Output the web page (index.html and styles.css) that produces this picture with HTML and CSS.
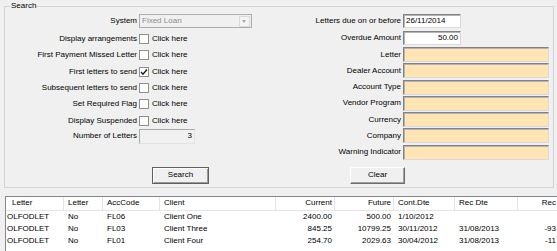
FILE: index.html
```html
<!DOCTYPE html>
<html lang="en">
<head>
  <meta charset="UTF-8">
  <title>Letters</title>
  <link rel="stylesheet" href="styles.css">
</head>
<body>

  <fieldset class="search">
    <legend>Search</legend>

    <div class="cols">
      <!-- left side -->
      <div class="left">
        <div class="field first">
          <label>System</label>
          <div class="combo"><span>Fixed Loan</span><i class="combo-btn"></i></div>
        </div>
        <div class="field">
          <label>Display arrangements</label>
          <span class="box"></span><span class="click">Click here</span>
        </div>
        <div class="field">
          <label>First Payment Missed Letter</label>
          <span class="box"></span><span class="click">Click here</span>
        </div>
        <div class="field">
          <label>First letters to send</label>
          <span class="box"><svg width="8" height="8" viewBox="0 0 8 8"><path d="M1 4 L3 6.2 L7 1.5" fill="none" stroke="#1a1a1a" stroke-width="1.4"/></svg></span><span class="click">Click here</span>
        </div>
        <div class="field">
          <label>Subsequent letters to send</label>
          <span class="box"></span><span class="click">Click here</span>
        </div>
        <div class="field">
          <label>Set Required Flag</label>
          <span class="box"></span><span class="click">Click here</span>
        </div>
        <div class="field">
          <label>Display Suspended</label>
          <span class="box"></span><span class="click">Click here</span>
        </div>
        <div class="field count">
          <label>Number of Letters</label>
          <div class="txt disabled num">3</div>
        </div>
      </div>

      <!-- right side -->
      <div class="right">
        <div class="field first">
          <label>Letters due on or before</label>
          <div class="txt small">26/11/2014</div>
        </div>
        <div class="field second">
          <label>Overdue Amount</label>
          <div class="txt small num">50.00</div>
        </div>
        <div class="field yellow">
          <label>Letter</label>
          <div class="txt wide"></div>
        </div>
        <div class="field yellow">
          <label>Dealer Account</label>
          <div class="txt wide"></div>
        </div>
        <div class="field yellow">
          <label>Account Type</label>
          <div class="txt wide"></div>
        </div>
        <div class="field yellow">
          <label>Vendor Program</label>
          <div class="txt wide"></div>
        </div>
        <div class="field yellow">
          <label>Currency</label>
          <div class="txt wide"></div>
        </div>
        <div class="field yellow">
          <label>Company</label>
          <div class="txt wide"></div>
        </div>
        <div class="field yellow">
          <label>Warning Indicator</label>
          <div class="txt wide"></div>
        </div>
      </div>
    </div>

    <div class="buttons">
      <button class="btn default">Search</button>
      <button class="btn clear">Clear</button>
    </div>
  </fieldset>

  <div class="list">
    <table>
      <colgroup>
        <col class="w1"><col class="w2"><col class="w3"><col class="w4"><col class="w5">
        <col class="w6"><col class="w7"><col class="w8"><col class="w9">
      </colgroup>
      <thead>
        <tr>
          <th class="first-col">Letter</th>
          <th>Letter</th>
          <th>AccCode</th>
          <th>Client</th>
          <th class="r">Current</th>
          <th class="r">Future</th>
          <th>Cont.Dte</th>
          <th>Rec Dte</th>
          <th class="r">Rec</th>
        </tr>
      </thead>
      <tbody>
        <tr>
          <td class="first-col">OLFODLET</td>
          <td>No</td>
          <td>FL06</td>
          <td>Client One</td>
          <td class="r">2400.00</td>
          <td class="r">500.00</td>
          <td>1/10/2012</td>
          <td></td>
          <td class="r"></td>
        </tr>
        <tr>
          <td class="first-col">OLFODLET</td>
          <td>No</td>
          <td>FL03</td>
          <td>Client Three</td>
          <td class="r">845.25</td>
          <td class="r">10799.25</td>
          <td>30/11/2012</td>
          <td>31/08/2013</td>
          <td class="r">-93</td>
        </tr>
        <tr>
          <td class="first-col">OLFODLET</td>
          <td>No</td>
          <td>FL01</td>
          <td>Client Four</td>
          <td class="r">254.70</td>
          <td class="r">2029.63</td>
          <td>30/04/2012</td>
          <td>31/08/2013</td>
          <td class="r">-11</td>
        </tr>
      </tbody>
    </table>
  </div>

</body>
</html>
```

FILE: styles.css
```css
body {
  margin: 0;
  padding-top: 1px;
  background-color: #f0f0f0;
  font-family: "Liberation Sans", Arial, sans-serif;
  font-size: 8px;
  line-height: 10px;
  color: #000;
  overflow: hidden;
  width: 557px;
  height: 251px;
}

/* Group box */
.search {
  margin: 0 0 0 4px;
  padding: 3px 0 3px 0;
  width: 548px;
  min-width: 0;
  border: 1px solid #d3d3d3;
}

.search legend {
  margin-left: 5px;
  padding: 0 1px;
  line-height: 10px;
}

.cols {
  display: flex;
  align-items: flex-start;
}

.left {
  width: 294px;
}

.right {
  width: 250px;
}

.field {
  display: flex;
  align-items: center;
  height: 16.3px;
}

.field label {
  text-align: right;
  white-space: nowrap;
  margin-right: 2px;
}

.left .field label {
  width: 132px;
}

.right .field label {
  width: 102px;
}

.field.first {
  height: 14px;
  margin-bottom: 3px;
}

.field.count {
  height: 15px;
}

.right .field.second {
  height: 14px;
  margin-bottom: 2px;
}

.right .field.yellow {
  height: 15px;
}

.right .field.yellow + .field.yellow {
  margin-top: 1.25px;
}

/* Combo box (disabled) */
.combo {
  box-sizing: border-box;
  width: 113px;
  height: 14px;
  border: 1px solid #adadad;
  background-color: #f0f0f0;
  color: #8c8c8c;
  display: flex;
  align-items: center;
  justify-content: space-between;
  padding-left: 2px;
}

.combo-btn {
  box-sizing: border-box;
  width: 11px;
  height: 11px;
  margin-right: 1px;
  border: 1px solid #d9d9d9;
  background-color: #f4f4f4;
  position: relative;
}

.combo-btn::after {
  content: "";
  position: absolute;
  left: 2px;
  top: 3px;
  border-left: 2.5px solid transparent;
  border-right: 2.5px solid transparent;
  border-top: 3px solid #a8a8a8;
}

/* Checkboxes */
.box {
  box-sizing: border-box;
  width: 10px;
  height: 10px;
  border: 1px solid #8e8f8f;
  background-color: #fff;
  display: flex;
  align-items: center;
  justify-content: center;
}

.click {
  margin-left: 3px;
}

/* Text boxes */
.txt {
  box-sizing: border-box;
  height: 100%;
  background-color: #fff;
  border: 1px solid;
  border-color: #828282 #dadada #dadada #828282;
  box-shadow: inset 1px 1px 0 #b4b4b4;
  padding: 0 2px;
  display: flex;
  align-items: center;
}

.txt.small {
  width: 58px;
}

.txt.wide {
  width: 146px;
  background-color: #ffe4b5;
}

.txt.disabled {
  width: 56px;
  background-color: #f0f0f0;
  border-color: #a9a9a9 #e3e3e3 #e3e3e3 #a9a9a9;
  box-shadow: none;
}

.txt.num {
  justify-content: flex-end;
}

/* Buttons */
.buttons {
  display: flex;
  margin-top: 7px;
}

.btn {
  box-sizing: border-box;
  height: 17px;
  font: inherit;
  color: #000;
  background-color: #f0f0f0;
  border: 1px solid;
  padding: 0;
}

.btn.default {
  width: 57px;
  margin-left: 147px;
  border-color: #5f5f5f;
  box-shadow: inset 1px 1px 0 #fff, inset -1px -1px 0 #9a9a9a;
}

.btn.clear {
  width: 55px;
  margin-left: 141px;
  border-color: #fff #6d6d6d #6d6d6d #fff;
  box-shadow: inset -1px -1px 0 #a0a0a0;
}

/* List view */
.list {
  margin: 8px 0 0 5px;
  width: 551px;
  height: 60px;
  background-color: #fff;
  border-top: 1px solid #828790;
  border-left: 1px solid #828790;
}

table {
  table-layout: fixed;
  border-collapse: collapse;
  width: 551px;
}

.w1 { width: 58px; }
.w2 { width: 39px; }
.w3 { width: 57px; }
.w4 { width: 116px; }
.w5 { width: 59px; }
.w6 { width: 59px; }
.w7 { width: 61px; }
.w8 { width: 63px; }
.w9 { width: 39px; }

th, td {
  padding: 0 0 0 4px;
  text-align: left;
  font-weight: normal;
  white-space: nowrap;
  overflow: hidden;
}

th {
  height: 13px;
  border-bottom: 1px solid #e5e5e5;
  box-shadow: inset -1px 0 0 #e5e5e5;
}

th:last-child {
  box-shadow: none;
}

td {
  height: 12px;
}

th.first-col {
  padding-left: 6px;
}

td.first-col {
  padding-left: 1px;
}

th.r, td.r {
  text-align: right;
  padding: 0 3px 0 0;
}

th:last-child, td:last-child {
  padding-right: 1px;
}
```
